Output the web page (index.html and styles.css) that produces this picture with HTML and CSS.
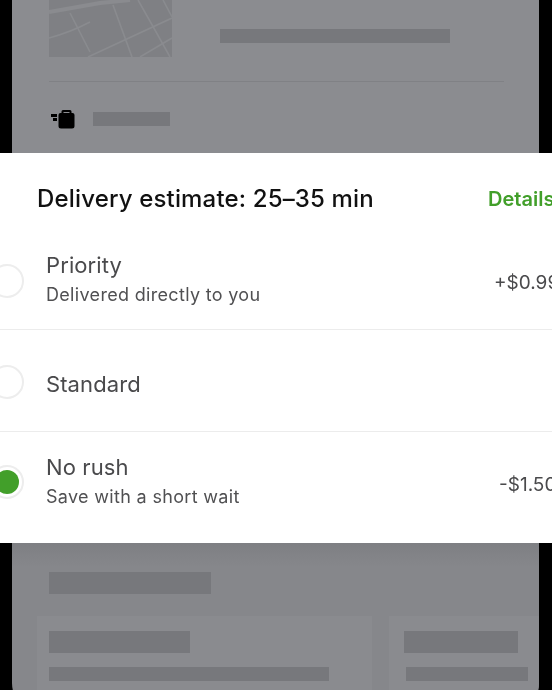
FILE: index.html
```html
<!DOCTYPE html>
<html lang="en">
<head>
<meta charset="utf-8">
<title>Delivery estimate</title>
<link rel="stylesheet" href="styles.css">
</head>
<body>
<div class="stage">
  <section class="top">
    <div class="map-row">
      <svg class="map" viewBox="0 0 123 57" aria-hidden="true">
        <rect width="123" height="57" fill="#7f8084"/>
        <g fill="none" stroke="#8a8b8f" stroke-width="1.6">
          <path d="M0 12 L51 3 L81 0" stroke-width="4"/>
          <path d="M21 13 L41 52"/>
          <path d="M0 38 Q22 32 41 22"/>
          <path d="M64 5 L83 57"/>
          <path d="M39 57 L123 18"/>
          <path d="M89 0 Q105 28 121 57"/>
          <path d="M91 57 L123 38"/>
          <path d="M114 0 L123 17"/>
        </g>
      </svg>
      <div class="bar bar-address"></div>
    </div>
    <div class="top-line"></div>
    <div class="order-row">
      <svg class="bag" viewBox="0 0 24 20" aria-hidden="true">
        <path d="M0 5h6v3H0zM2 9h4v3H2z" fill="#000"/>
        <path d="M10.500 4 V2.500 Q10.500 1 12 1 h7 Q20.500 1 20.500 2.500 V4 h1 Q23.500 4 23.500 6 V17 Q23.500 19.500 21 19.500 H10 Q7.500 19.500 7.500 17 V6 Q7.500 4 9.500 4z M12.500 4 h6 V3 h-6z" fill="#000" fill-rule="evenodd"/>
      </svg>
      <div class="bar bar-order"></div>
    </div>
  </section>

  <section class="sheet">
    <header class="sheet-head">
      <h1 class="sheet-title">Delivery estimate: 25–35 min</h1>
      <a class="details">Details</a>
    </header>
    <div class="option option-first">
      <span class="radio"></span>
      <div class="option-text">
        <div class="option-name">Priority</div>
        <div class="option-sub">Delivered directly to you</div>
      </div>
      <div class="price">+$0.99</div>
    </div>
    <div class="option option-mid">
      <span class="radio"></span>
      <div class="option-text">
        <div class="option-name">Standard</div>
      </div>
    </div>
    <div class="option option-last">
      <span class="radio radio-on"></span>
      <div class="option-text">
        <div class="option-name">No rush</div>
        <div class="option-sub">Save with a short wait</div>
      </div>
      <div class="price price-neg">-$1.50</div>
    </div>
  </section>

  <section class="bottom">
    <div class="bar bar-heading"></div>
    <div class="cards">
      <div class="card card-a">
        <div class="bar bar-title-a"></div>
        <div class="bar bar-line-a"></div>
      </div>
      <div class="card card-b">
        <div class="bar bar-title-b"></div>
        <div class="bar bar-line-b"></div>
      </div>
    </div>
  </section>
</div>
</body>
</html>
```

FILE: styles.css
```css
* { box-sizing: border-box; }
html, body { margin: 0; padding: 0; background: #000; }
.stage {
  width: 552px;
  height: 690px;
  overflow: hidden;
  display: flex;
  flex-direction: column;
  font-family: Inter, "Liberation Sans", sans-serif;
  background: #000;
  filter: blur(0.4px);
}
.bar { background: #77787c; }

/* dimmed page above the sheet */
.top {
  flex: none;
  height: 153px;
  margin: 0 13px 0 12px;
  padding-left: 37px;
  background: #8b8c90;
}
.map-row { display: flex; height: 81px; }
.map { width: 123px; height: 57px; display: block; flex: none; }
.bar-address { width: 230px; height: 14px; margin: 29px 0 0 48px; }
.top-line { width: 455px; height: 1px; background: #808185; }
.order-row { display: flex; align-items: flex-start; padding: 27px 0 0 2px; }
.bag { width: 24px; height: 20px; flex: none; display: block; }
.bar-order { width: 77px; height: 14px; margin: 3px 0 0 18px; }

/* white sheet */
.sheet {
  flex: none;
  height: 390px;
  background: #fff;
  overflow: hidden;
  white-space: nowrap;
}
.sheet-head {
  display: flex;
  justify-content: space-between;
  align-items: center;
  width: 600px;
  height: 92px;
  padding: 0 0 0 37px;
}
.sheet-title {
  margin: 0;
  font-size: 24px;
  line-height: 30px;
  font-weight: 550;
  letter-spacing: 0.16px;
  color: #111;
}
.details {
  width: 112px;
  font-size: 20px;
  line-height: 26px;
  font-weight: 600;
  color: #429f2a;
}
.option {
  display: flex;
  align-items: center;
  width: 600px;
  border-bottom: 1px solid #ececec;
}
.option-first { height: 85px; padding-bottom: 12px; }
.option-mid { height: 102px; padding-top: 3px; }
.option-last { height: 111px; border-bottom: 0; padding-bottom: 11px; }
.radio {
  flex: none;
  width: 34px;
  height: 34px;
  margin-left: -10px;
  border: 2px solid #ededed;
  border-radius: 50%;
  background: #fff;
  display: flex;
  align-items: center;
  justify-content: center;
}
.radio-on::after {
  content: "";
  width: 24px;
  height: 24px;
  border-radius: 50%;
  background: #429f2a;
}
.option-text { flex: 1; margin-left: 22px; }
.option-last .option-text { padding-top: 2px; }
.option-name {
  font-size: 22px;
  line-height: 28px;
  letter-spacing: 0.1px;
  color: #4a4a4c;
}
.option-first .option-name, .option-last .option-name { margin-top: -2px; }
.option-mid .option-name { margin-top: 4px; }
.option-sub {
  margin-top: 2px;
  font-size: 18px;
  line-height: 28px;
  letter-spacing: 0.32px;
  color: #505052;
}
.price {
  width: 106px;
  margin-top: 4px;
  font-size: 19px;
  line-height: 26px;
  color: #4a4a4c;
}
.price-neg { width: 101px; margin-top: 6px; }

/* dimmed page below the sheet */
.bottom {
  flex: none;
  height: 170px;
  margin: 0 13px 0 12px;
  padding: 29px 0 0 37px;
  border-radius: 0 0 30px 30px;
  background: linear-gradient(#7e7f83, #86878b 24px);
  overflow: hidden;
}
.bar-heading { width: 162px; height: 22px; }
.cards { display: flex; gap: 17px; margin: 22px 0 0 -12px; }
.card { flex: none; height: 120px; padding-top: 15px; background: #8a8b8f; }
.card-a { width: 335px; padding-left: 12px; }
.card-b { width: 150px; padding-left: 15px; }
.bar-title-a { width: 141px; height: 22px; }
.bar-line-a { width: 280px; height: 14px; margin-top: 14px; }
.bar-title-b { width: 114px; height: 22px; }
.bar-line-b { width: 122px; height: 14px; margin: 14px 0 0 2px; }
```
